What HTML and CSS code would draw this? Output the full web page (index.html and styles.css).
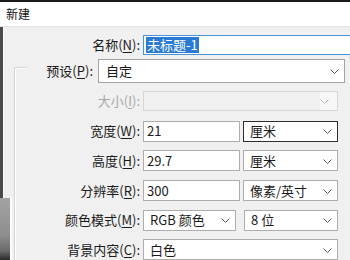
FILE: index.html
```html
<!DOCTYPE html>
<html lang="zh-CN">
<head>
    <meta charset="UTF-8">
    <title>新建</title>
    <link rel="stylesheet" href="styles.css">
</head>
<body>
    <div class="window">
        <div class="titlebar">新建</div>
        <div class="frame">
            <div class="edge">
                <div class="edge-top"></div>
                <div class="edge-bottom"></div>
            </div>
            <div class="dialog">
                <div class="row row-name">
                    <label class="label name-label">名称(<u>N</u>):</label>
                    <div class="input name-input"><span class="selected">未标题-1</span></div>
                </div>
                <div class="row row-preset">
                    <div class="corner"></div>
                    <label class="label preset-label">预设(<u>P</u>):</label>
                    <div class="select preset-select">
                        <span>自定</span>
                        <svg class="chevron" width="9" height="5" viewBox="0 0 9 5"><polyline points="0.5,0.5 4.5,4.5 8.5,0.5"/></svg>
                    </div>
                </div>
                <div class="group">
                    <div class="row row-size">
                        <label class="label disabled">大小(<u>I</u>):</label>
                        <div class="select wide disabled-select">
                            <span></span>
                            <span class="drop"><svg class="chevron" width="9" height="5" viewBox="0 0 9 5"><polyline points="0.5,0.5 4.5,4.5 8.5,0.5"/></svg></span>
                        </div>
                    </div>
                    <div class="row">
                        <label class="label">宽度(<u>W</u>):</label>
                        <div class="input num">21</div>
                        <div class="select unit active">
                            <span>厘米</span>
                            <svg class="chevron" width="9" height="5" viewBox="0 0 9 5"><polyline points="0.5,0.5 4.5,4.5 8.5,0.5"/></svg>
                        </div>
                    </div>
                    <div class="row">
                        <label class="label">高度(<u>H</u>):</label>
                        <div class="input num">29.7</div>
                        <div class="select unit">
                            <span>厘米</span>
                            <svg class="chevron" width="9" height="5" viewBox="0 0 9 5"><polyline points="0.5,0.5 4.5,4.5 8.5,0.5"/></svg>
                        </div>
                    </div>
                    <div class="row">
                        <label class="label">分辨率(<u>R</u>):</label>
                        <div class="input num">300</div>
                        <div class="select unit">
                            <span>像素/英寸</span>
                            <svg class="chevron" width="9" height="5" viewBox="0 0 9 5"><polyline points="0.5,0.5 4.5,4.5 8.5,0.5"/></svg>
                        </div>
                    </div>
                    <div class="row">
                        <label class="label">颜色模式(<u>M</u>):</label>
                        <div class="select mode">
                            <span>RGB 颜色</span>
                            <svg class="chevron" width="9" height="5" viewBox="0 0 9 5"><polyline points="0.5,0.5 4.5,4.5 8.5,0.5"/></svg>
                        </div>
                        <div class="select bits">
                            <span>8 位</span>
                            <svg class="chevron" width="9" height="5" viewBox="0 0 9 5"><polyline points="0.5,0.5 4.5,4.5 8.5,0.5"/></svg>
                        </div>
                    </div>
                    <div class="row">
                        <label class="label">背景内容(<u>C</u>):</label>
                        <div class="select wide">
                            <span>白色</span>
                            <svg class="chevron" width="9" height="5" viewBox="0 0 9 5"><polyline points="0.5,0.5 4.5,4.5 8.5,0.5"/></svg>
                        </div>
                    </div>
                </div>
            </div>
        </div>
    </div>
</body>
</html>
```

FILE: styles.css
```css
* {
    box-sizing: border-box;
}
html, body {
    margin: 0;
}
body {
    width: 350px;
    height: 260px;
    overflow: hidden;
    background: #f0f0f0;
    font-family: "Noto Sans CJK SC", "Noto Sans", sans-serif;
    font-size: 13px;
    color: #1a1a1a;
}
u {
    text-decoration-thickness: 1px;
    text-underline-offset: 2px;
}
.window {
    height: 260px;
    border-top: 2px solid #1c1c1c;
    display: flex;
    flex-direction: column;
}
.titlebar {
    height: 25px;
    background: #fff;
    padding-left: 6px;
    font-size: 12px;
    line-height: 23px;
    color: #111;
    border-bottom: 1px solid #e4e4e4;
}
.frame {
    flex: 1;
    display: flex;
    overflow: hidden;
}

/* left edge of the window, with the backdrop showing at the bottom */
.edge {
    width: 12px;
    flex-shrink: 0;
    display: flex;
    flex-direction: column;
}
.edge-top {
    flex: 1;
    border-left: 3px solid #4a4a4a;
    box-shadow: inset 1px 0 0 #fafafa;
}
.edge-bottom {
    height: 62px;
    background: linear-gradient(180deg, #a3a3a3 0%, #8e8e8e 60%, #6a6a6a 85%, #2a2a2a 100%);
    border-right: 2px solid #fbfbfb;
}
.dialog {
    flex: 1;
    min-width: 0;
    padding-top: 8px;
}
.row {
    display: flex;
    align-items: center;
    height: 21px;
}
.row > * {
    flex-shrink: 0;
}
.label {
    text-align: right;
    white-space: nowrap;
    line-height: 16px;
    width: 126px;
    padding-right: 1px;
}
.label.disabled {
    color: #a8a8a8;
}
.input,
.select {
    height: 100%;
    background: #fff;
    border: 1px solid #adadad;
    display: flex;
    align-items: center;
    line-height: 16px;
    white-space: nowrap;
    margin-left: 2px;
}
.input {
    padding-left: 3px;
}
.select {
    justify-content: space-between;
    padding: 0 5px 0 6px;
}
.chevron {
    fill: none;
    stroke: #5a5a5a;
    stroke-width: 1;
    margin-top: 1px;
}

/* name */
.row-name {
    height: 20px;
    margin-bottom: 4px;
}
.name-label {
    width: 129px;
}
.name-input {
    width: 215px;
    border-color: #4b93d8;
    padding-left: 2px;
}
.selected {
    background: #2a7bd3;
    color: #fff;
    padding: 0 1px;
}

/* preset */
.row-preset {
    height: 24px;
    align-items: stretch;
}
.corner {
    width: 13px;
    margin-left: 2px;
    margin-top: 8px;
    border-top: 1px solid #d4d4d4;
    border-left: 1px solid #d4d4d4;
    box-shadow: inset 1px 1px 0 #fff;
}
.preset-label {
    width: 67px;
    align-self: center;
}
.preset-select {
    width: 247px;
    margin-left: 4px;
    border-color: #a4a4a4;
    padding-left: 7px;
}

/* group box */
.group {
    margin-left: 2px;
    border-left: 1px solid #d4d4d4;
    box-shadow: inset 1px 0 0 #fff;
    padding-top: 8px;
    display: flex;
    flex-direction: column;
    gap: 8.7px;
}
.row-size {
    height: 20px;
    margin-bottom: 1px;
}
.wide {
    width: 195px;
}
.disabled-select {
    background: #f0f0f0;
    border-color: #d6d6d6;
    padding-right: 0;
}
.disabled-select .chevron {
    stroke: #b8b8b8;
}
.drop {
    height: 100%;
    width: 17px;
    background: #f7f7f7;
    display: flex;
    align-items: center;
}
.num {
    width: 97px;
}
.unit {
    width: 95px;
    margin-left: 3px;
}
.unit.active {
    border-color: #2e2e2e;
}
.mode {
    width: 93px;
}
.bits {
    width: 94px;
    margin-left: 8px;
}
```
